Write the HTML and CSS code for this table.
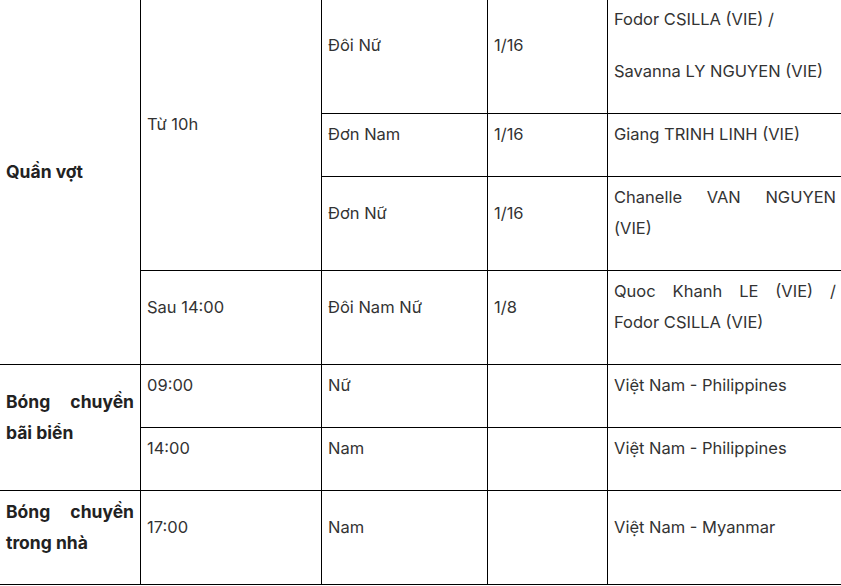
FILE: index.html
```html
<!DOCTYPE html>
<html lang="vi">
<head>
<meta charset="utf-8">
<link rel="stylesheet" href="styles.css">
</head>
<body>
<table class="schedule">
  <colgroup>
    <col class="c1"><col class="c2"><col class="c3"><col class="c4"><col class="c5">
  </colgroup>
  <tbody>
    <tr>
      <td rowspan="4" class="sport"><p>Quần vợt</p></td>
      <td rowspan="3"><p>Từ 10h</p></td>
      <td><p>Đôi Nữ</p></td>
      <td><p>1/16</p></td>
      <td><p>Fodor CSILLA (VIE) /</p><p>Savanna LY NGUYEN (VIE)</p></td>
    </tr>
    <tr>
      <td><p>Đơn Nam</p></td>
      <td><p>1/16</p></td>
      <td><p>Giang TRINH LINH (VIE)</p></td>
    </tr>
    <tr>
      <td><p>Đơn Nữ</p></td>
      <td><p>1/16</p></td>
      <td><p>Chanelle VAN NGUYEN (VIE)</p></td>
    </tr>
    <tr>
      <td><p>Sau 14:00</p></td>
      <td><p>Đôi Nam Nữ</p></td>
      <td><p>1/8</p></td>
      <td><p>Quoc Khanh LE (VIE) / Fodor CSILLA (VIE)</p></td>
    </tr>
    <tr>
      <td rowspan="2" class="sport"><p>Bóng chuyền bãi biển</p></td>
      <td class="top"><p>09:00</p></td>
      <td class="top"><p>Nữ</p></td>
      <td class="top"></td>
      <td class="top"><p>Việt Nam - Philippines</p></td>
    </tr>
    <tr>
      <td class="top"><p>14:00</p></td>
      <td class="top"><p>Nam</p></td>
      <td class="top"></td>
      <td class="top"><p>Việt Nam - Philippines</p></td>
    </tr>
    <tr>
      <td class="sport"><p>Bóng chuyền trong nhà</p></td>
      <td><p>17:00</p></td>
      <td><p>Nam</p></td>
      <td></td>
      <td><p>Việt Nam - Myanmar</p></td>
    </tr>
  </tbody>
</table>
</body>
</html>
```

FILE: styles.css
```css
html, body {
  margin: 0;
  padding: 0;
  background: #fff;
}

body {
  font-family: Inter, "Noto Sans", sans-serif;
  font-size: 16.5px;
  color: #333;
}

.schedule {
  border-collapse: collapse;
  table-layout: fixed;
  width: 843px;
  margin: -2px 0 0 -1px;
}

.c1 { width: 141px; }
.c2 { width: 181px; }
.c3 { width: 166px; }
.c4 { width: 120px; }
.c5 { width: 235px; }

.schedule td {
  border: 1px solid #000;
  padding: 5px 6px;
  vertical-align: middle;
  text-align: justify;
  line-height: 31px;
}

.schedule td.top {
  vertical-align: top;
}

.schedule p {
  margin: 0 0 21px;
}

.sport {
  font-weight: 700;
  font-size: 17.5px;
  color: #222;
}
```
